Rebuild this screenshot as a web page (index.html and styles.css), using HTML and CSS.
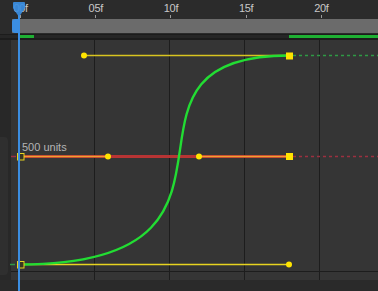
FILE: index.html
```html
<!DOCTYPE html>
<html>
<head>
<meta charset="utf-8">
<link rel="stylesheet" href="styles.css">
</head>
<body>
<div class="editor">
  <div class="ruler">
    <div class="tick"><span>00f</span></div>
    <div class="tick"><span>05f</span></div>
    <div class="tick"><span>10f</span></div>
    <div class="tick"><span>15f</span></div>
    <div class="tick"><span>20f</span></div>
  </div>
  <div class="track">
    <div class="track-side"></div>
    <div class="track-bar"><div class="grip"></div></div>
  </div>
  <div class="range">
    <div class="range-line">
      <div class="seg seg-a"></div>
      <div class="seg seg-gap"></div>
      <div class="seg seg-b"></div>
    </div>
  </div>
  <div class="graph">
    <div class="side"><div class="side-tab"></div></div>
    <div class="plot"></div>
    <svg class="curves" viewBox="0 40 378 240" width="378" height="240">
      <g stroke="#1d1d1d" stroke-width="1">
        <line x1="94.5" y1="40" x2="94.5" y2="280"/>
        <line x1="169.5" y1="40" x2="169.5" y2="280"/>
        <line x1="244.5" y1="40" x2="244.5" y2="280"/>
        <line x1="319.5" y1="40" x2="319.5" y2="280"/>
        <line x1="11" y1="271.5" x2="378" y2="271.5"/>
      </g>
      <line x1="22" y1="156.5" x2="289" y2="156.5" stroke="#b83434" stroke-width="3"/>
      <line x1="293" y1="156.5" x2="378" y2="156.5" stroke="#9c3040" stroke-width="1.5" stroke-dasharray="3 3"/>
      <line x1="11" y1="156.5" x2="16" y2="156.5" stroke="#9c3040" stroke-width="1.5"/>
      <line x1="22" y1="156.5" x2="108" y2="156.5" stroke="#f0a030" stroke-width="1.6"/>
      <line x1="199" y1="156.5" x2="289" y2="156.5" stroke="#f0a030" stroke-width="1.6"/>
      <line x1="293" y1="55.5" x2="378" y2="55.5" stroke="#2f9a45" stroke-width="1.5" stroke-dasharray="3 3"/>
      <line x1="10" y1="264.5" x2="15" y2="264.5" stroke="#2f9a45" stroke-width="1.5"/>
      <line x1="84" y1="55.5" x2="289" y2="55.5" stroke="#d8c420" stroke-width="1.3"/>
      <line x1="22" y1="264.5" x2="289" y2="264.5" stroke="#e8d420" stroke-width="1.3"/>
      <path d="M20,264.5 C289,264.5 84,55.5 289,55.5" fill="none" stroke="#22dd33" stroke-width="2.4"/>
      <g fill="#ffe400">
        <circle cx="84" cy="55.5" r="3"/>
        <circle cx="108" cy="156.5" r="3"/>
        <circle cx="199" cy="156.5" r="3"/>
        <circle cx="289" cy="264.5" r="3"/>
        <rect x="286" y="52.5" width="7" height="7"/>
        <rect x="286" y="153" width="7" height="7"/>
      </g>
      <g fill="#3a3520" stroke="#e8d420" stroke-width="1">
        <rect x="17.5" y="153.5" width="6.5" height="6.5"/>
        <rect x="17.5" y="261.5" width="6.5" height="6.5"/>
      </g>
      <text x="22" y="151" class="units">500 units</text>
    </svg>
  </div>
  <div class="foot"></div>
  <div class="playhead">
    <svg class="marker" viewBox="0 0 12 15" width="12" height="15">
      <path d="M1,0 H11 Q12,0 12,1 V6 L6,15 L0,6 V1 Q0,0 1,0 Z" fill="#3b8ee2" fill-opacity="0.92"/>
    </svg>
    <div class="phline"></div>
  </div>
</div>
</body>
</html>
```
FILE: styles.css
```css
html, body {
  margin: 0;
  padding: 0;
  background: #2a2a2a;
}
body {
  width: 378px;
  height: 291px;
  overflow: hidden;
  font-family: "Liberation Sans", Arial, sans-serif;
}
.editor {
  position: relative;
  width: 378px;
  height: 291px;
  overflow: hidden;
  display: flex;
  flex-direction: column;
}
.ruler {
  height: 18px;
  background: #2b2b2b;
  display: flex;
  margin-left: -17px;
}
.tick {
  flex: 0 0 75.2px;
  display: flex;
  flex-direction: column;
  align-items: center;
  position: relative;
}
.tick span {
  font-size: 11px;
  color: #c8c8c8;
  line-height: 11px;
  margin-top: 3px;
  letter-spacing: -0.3px;
}
.tick::after {
  content: "";
  width: 1px;
  height: 3px;
  margin-top: 1px;
  background: #9a9a9a;
}
.track {
  height: 16px;
  display: flex;
  background: #2b2b2b;
}
.track-side {
  width: 12px;
  background: #2b2b2b;
}
.track-bar {
  flex: 1;
  background: #6b6b6b;
  margin-top: 1px;
  margin-bottom: 1px;
}
.grip {
  width: 6px;
  height: 14px;
  background: #3b8ee2;
  border-radius: 3px 0 0 3px;
}
.range {
  height: 6px;
  background: #1c1c1c;
  padding-top: 1px;
  box-sizing: border-box;
}
.range-line {
  height: 3px;
  display: flex;
  background: #262626;
}
.seg-a {
  margin-left: 19px;
  width: 15px;
  background: #1fb033;
}
.seg-gap {
  width: 255px;
}
.seg-b {
  flex: 1;
  background: #1fb033;
}
.graph {
  position: relative;
  height: 240px;
  display: flex;
}
.side {
  width: 11px;
  background: #282828;
  position: relative;
}
.side-tab {
  margin-top: 97px;
  height: 138px;
  width: 8px;
  background: #2f2f2f;
  border-radius: 0 4px 4px 0;
}
.plot {
  flex: 1;
  background: #353535;
}
.curves {
  position: absolute;
  left: 0;
  top: 0;
}
.units {
  font-family: "Liberation Sans", Arial, sans-serif;
  font-size: 11px;
  fill: #b4b4b4;
}
.foot {
  flex: 1;
  background: #2a2a2a;
}
.playhead {
  position: absolute;
  left: 13px;
  top: 0;
  width: 12px;
  height: 291px;
  display: flex;
  flex-direction: column;
  align-items: center;
}
.marker {
  margin-top: 2px;
  display: block;
}
.phline {
  width: 2px;
  flex: 1;
  margin-top: -2px;
  background: #3b8ee2;
}
```
